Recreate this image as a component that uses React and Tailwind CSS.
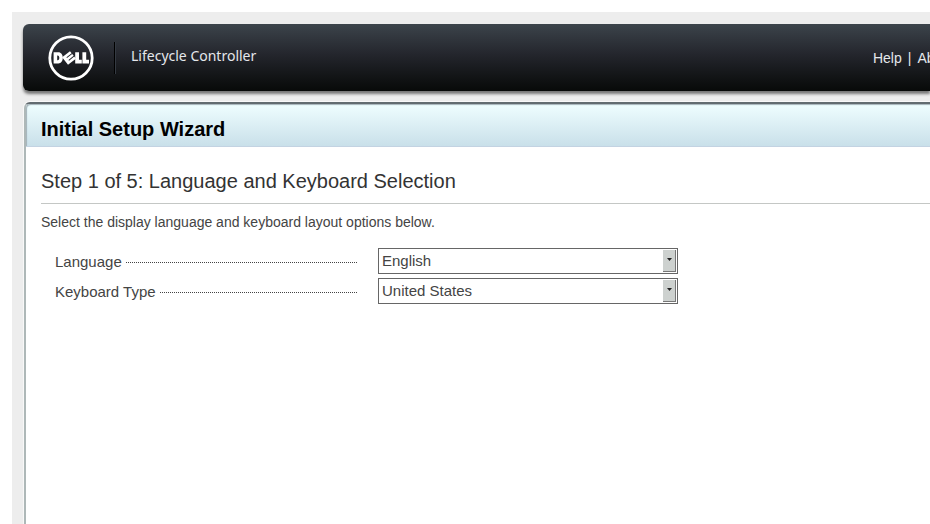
import React from "react";

const FIELDS = [
  { id: "language", label: "Language", options: ["English"] },
  { id: "keyboard", label: "Keyboard Type", options: ["United States"] },
];

function DellLogo() {
  return (
    <svg viewBox="0 0 46 46" className="size-[46px] shrink-0" fill="none" role="img" aria-label="Dell">
      <circle cx="23" cy="23" r="21.2" stroke="#fff" strokeWidth="2.8" />
      <g fill="#fff">
        <path
          fillRule="evenodd"
          d="M5.6 17.2H10.4C13 17.2 14.8 19.6 14.8 22.8C14.8 26 13 28.4 10.4 28.4H5.6ZM9.2 20.4V25.2H9.7C10.8 25.2 11.3 24.2 11.3 22.8C11.3 21.4 10.8 20.4 9.7 20.4Z"
        />
        <path
          transform="rotate(-38 21 23)"
          d="M16 18.2H26V20.9H19.4V21.8H26V24.2H19.4V25.1H26V27.8H16Z"
        />
        <path d="M27.2 17.2H31V24.8H33.8V28.4H27.2Z" />
        <path d="M34.4 17.2H38.2V24.8H41V28.4H34.4Z" />
      </g>
    </svg>
  );
}

function Header() {
  return (
    <header className="flex h-[67px] items-center rounded-l-md bg-linear-to-b from-[#3c444b] via-[#24262d] via-45% to-[#080a09] pl-[25px] shadow-[0_3px_3px_#777]">
      <DellLogo />
      <div className="ml-5 h-8 w-px bg-black shadow-[1px_0_0_#343a42]" />
      <div className="ml-4 pb-1 font-['Noto_Sans',sans-serif] text-sm text-gray-200">
        Lifecycle Controller
      </div>
      <nav className="-mr-6 ml-auto flex gap-1.5 pt-px text-sm text-gray-200">
        <a href="#help">Help</a>
        <span>|</span>
        <a href="#about">About</a>
      </nav>
    </header>
  );
}

function SelectField({ field }) {
  return (
    <div className="flex items-center">
      <div className="mr-5 flex w-[303px] items-center gap-1 pt-0.5">
        <label htmlFor={field.id} className="shrink-0">
          {field.label}
        </label>
        <div className="h-px flex-1 bg-[repeating-linear-gradient(90deg,#444_0_1px,transparent_1px_2px)]" />
      </div>
      <div className="relative w-[300px]">
        <select
          id={field.id}
          className="block h-[26px] w-full appearance-none border border-[#666] bg-white pl-[3px] text-[#444] outline-none"
        >
          {field.options.map((option) => (
            <option key={option}>{option}</option>
          ))}
        </select>
        <div className="pointer-events-none absolute inset-y-0.5 right-0.5 flex w-[13px] justify-center border-r border-b border-[#777] bg-[#cdd1cf] pt-2">
          <svg viewBox="0 0 5 3" className="h-[3px] w-[5px]" fill="#222">
            <path d="M0 0H5L2.5 3Z" />
          </svg>
        </div>
      </div>
    </div>
  );
}

export default function App() {
  return (
    <div className="h-screen overflow-hidden bg-white pt-3 pl-3 font-['Liberation_Sans',Arial,sans-serif]">
      <div className="flex h-full flex-col bg-[#ededed] pt-3 pl-[11px]">
        <Header />
        <main className="mt-[11px] ml-px flex-1 rounded-tl-md border-t-2 border-l-2 border-t-[#626b70] border-l-[#aeb8b8] bg-white text-[15px] text-[#444] shadow-[0_0_0_1px_#f8f8f8]">
          <h1 className="flex h-[43px] items-center rounded-tl-sm border-b border-[#c3d3e2] bg-linear-to-b from-[#effeff] to-[#c9e0ea] pt-2 pl-[15px] text-xl font-bold text-black shadow-[inset_1px_1px_1px_#a3b2b8]">
            Initial Setup Wizard
          </h1>
          <div className="pl-[15px]">
            <h2 className="border-b border-[#c4c7c5] pt-5 pb-2 text-xl text-[#333]">
              Step 1 of 5: Language and Keyboard Selection
            </h2>
            <p className="pt-2 text-sm">
              Select the display language and keyboard layout options below.
            </p>
            <form className="mt-4 flex flex-col gap-1 pl-3.5">
              {FIELDS.map((field) => (
                <SelectField key={field.id} field={field} />
              ))}
            </form>
          </div>
        </main>
      </div>
    </div>
  );
}
